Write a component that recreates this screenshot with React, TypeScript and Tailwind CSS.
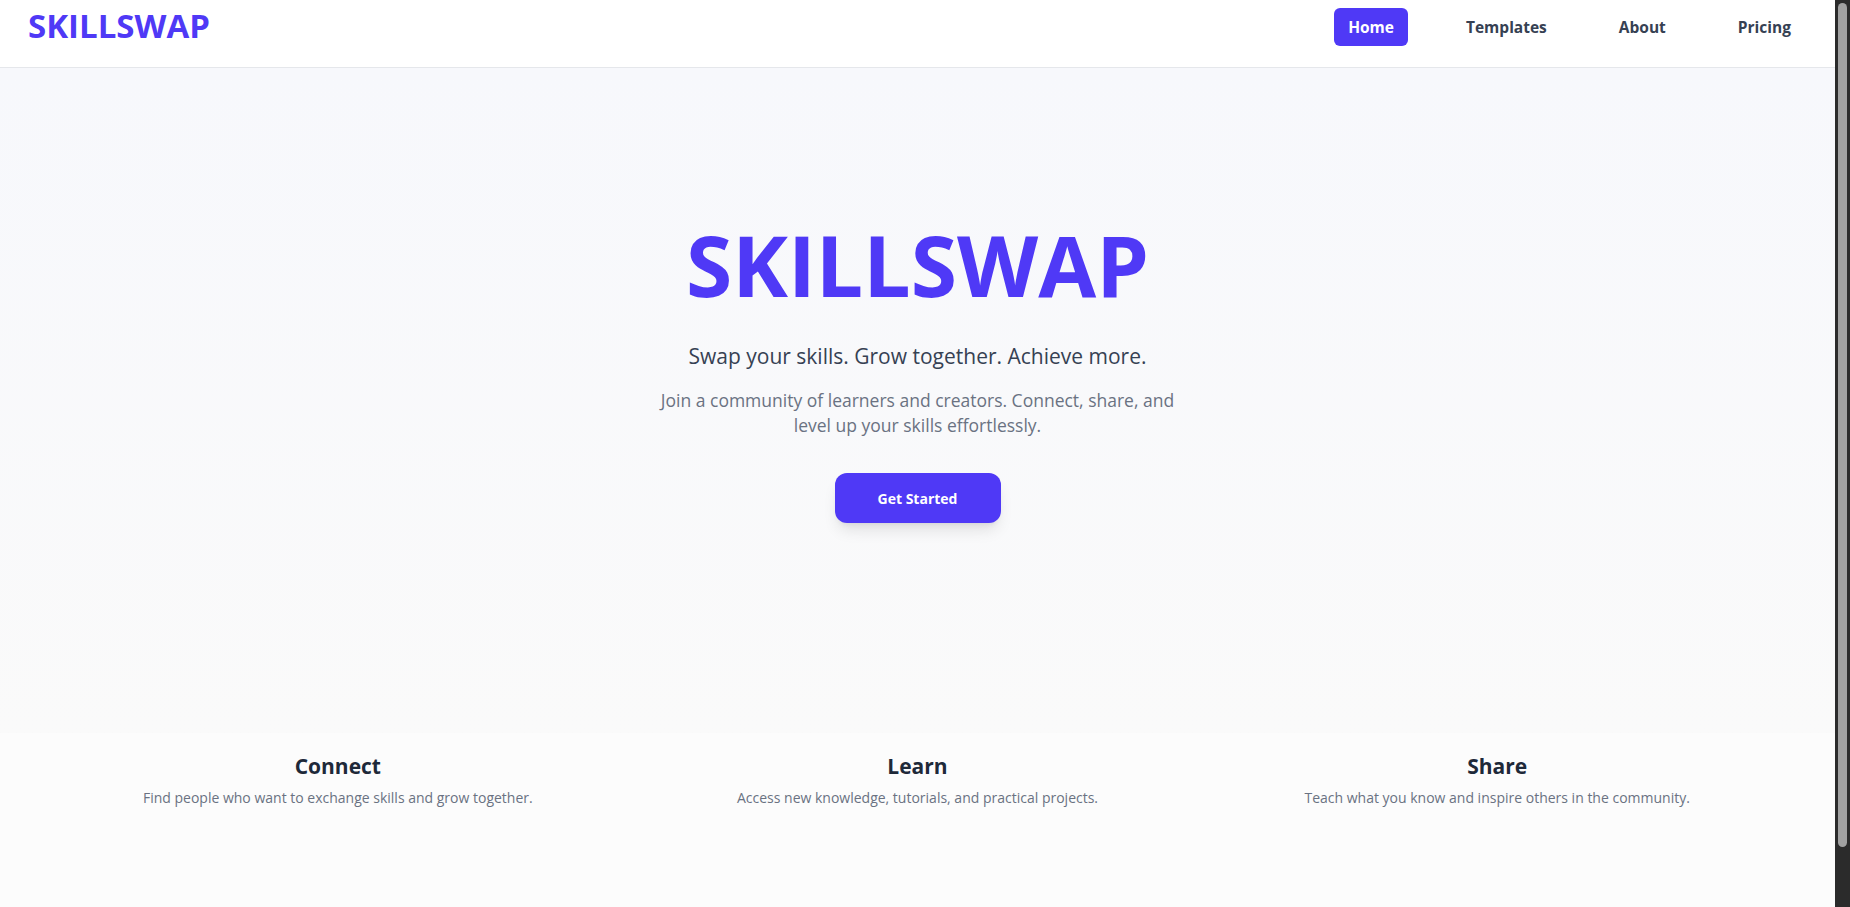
import { clsx } from "clsx";

const navLinks = ["Home", "Templates", "About", "Pricing"];

const features = [
  {
    title: "Connect",
    text: "Find people who want to exchange skills and grow together.",
  },
  {
    title: "Learn",
    text: "Access new knowledge, tutorials, and practical projects.",
  },
  {
    title: "Share",
    text: "Teach what you know and inspire others in the community.",
  },
];

export default function App() {
  return (
    <div className="flex h-screen overflow-hidden bg-[#fcfcfc] font-['Open_Sans',sans-serif]">
      <main className="min-w-0 flex-1">
        <header className="flex h-[68px] items-start justify-between border-b border-gray-200 bg-white pt-2 pr-[30px] pl-7 shadow-[0_1px_3px_rgba(0,0,0,0.06)]">
          <span className="text-[33px] font-bold leading-9 text-indigo-600">
            SKILLSWAP
          </span>
          <nav className="flex items-center gap-11">
            {navLinks.map((link, i) => (
              <a
                key={link}
                href="#"
                className={clsx(
                  "rounded-md px-3.5 py-2 text-[15.5px] font-bold leading-[22px]",
                  i === 0 ? "bg-indigo-600 text-white" : "text-gray-700"
                )}
              >
                {link}
              </a>
            ))}
          </nav>
        </header>

        <section className="flex h-[665px] flex-col items-center bg-linear-to-b from-[#f7f8fc] to-[#fafafa] pt-[155px] text-center">
          <h1 className="text-[84px] font-bold leading-none text-indigo-600">
            SKILLSWAP
          </h1>
          <p className="mt-[33px] text-[21px] leading-8 text-gray-700">
            Swap your skills. Grow together. Achieve more.
          </p>
          <p className="mt-4 max-w-[530px] text-[17.5px] leading-[25px] text-gray-500">
            Join a community of learners and creators. Connect, share, and
            level up your skills effortlessly.
          </p>
          <button className="mt-[35px] h-[50px] w-[166px] rounded-xl bg-indigo-600 text-[14px] font-bold text-white shadow-lg">
            Get Started
          </button>
        </section>

        <section className="grid h-[174px] grid-cols-3 px-12 pt-[17px] text-center">
          {features.map((f) => (
            <div key={f.title} className="flex flex-col items-center">
              <h3 className="text-[21px] font-bold leading-8 text-gray-800">
                {f.title}
              </h3>
              <p className="mt-1 text-[14px] leading-6 text-gray-500">
                {f.text}
              </p>
            </div>
          ))}
        </section>
      </main>

      <aside className="flex h-screen w-[15px] shrink-0 justify-center bg-[#2b2b2b] pt-[3px] pb-[60px]">
        <div className="w-[9px] rounded-full bg-[#a1a1a1]" />
      </aside>
    </div>
  );
}
